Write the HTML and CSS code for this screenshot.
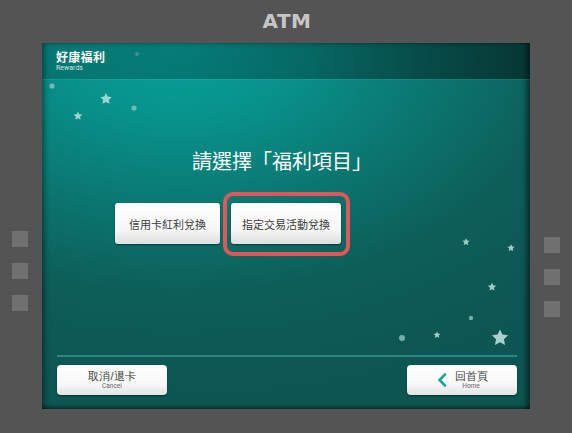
FILE: index.html
```html
<!DOCTYPE html>
<html lang="zh-Hant">
<head>
<meta charset="utf-8">
<title>ATM</title>
<link rel="stylesheet" href="styles.css">
</head>
<body>
<div class="atm">
  <div class="atm-title">ATM</div>
  <div class="atm-body">
    <div class="side side-left">
      <span class="key"></span><span class="key"></span><span class="key"></span>
    </div>
    <div class="screen">
      <svg class="sky" width="488" height="366" viewBox="0 0 488 366" aria-hidden="true">
        <defs>
          <polygon id="st" points="0,-1 0.29,-0.4 0.951,-0.309 0.47,0.153 0.588,0.809 0,0.5 -0.588,0.809 -0.47,0.153 -0.951,-0.309 -0.29,-0.4"/>
        </defs>
        <g fill="#b9dedb">
          <use href="#st" transform="translate(95 11) scale(3)" opacity="0.45"/>
          <use href="#st" transform="translate(64 56) scale(6)" opacity="0.85"/>
          <use href="#st" transform="translate(36 73) scale(4.5)" opacity="0.85"/>
          <use href="#st" transform="translate(424 199) scale(3.8)" opacity="0.85"/>
          <use href="#st" transform="translate(469 205) scale(3.8)" opacity="0.85"/>
          <use href="#st" transform="translate(450 244) scale(4.3)" opacity="0.85"/>
          <use href="#st" transform="translate(395 292) scale(3.6)" opacity="0.85"/>
          <use href="#st" transform="translate(458 295) scale(8.5)" opacity="0.9"/>
        </g>
        <g fill="#8fc3c0" opacity="0.8">
          <circle cx="10" cy="43" r="2.6"/>
          <circle cx="92" cy="65" r="2.6"/>
          <circle cx="429" cy="275" r="2.2"/>
          <circle cx="360" cy="295" r="3"/>
        </g>
      </svg>
      <header class="screen-head">
        <div class="brand">好康福利</div>
        <div class="brand-en">Rewards</div>
      </header>
      <main class="screen-main">
        <h1 class="prompt">請選擇「福利項目」</h1>
        <div class="options">
          <button class="opt opt-a">信用卡紅利兌換</button>
          <button class="opt opt-b">指定交易活動兌換<span class="ring"></span></button>
        </div>
      </main>
      <footer class="screen-foot">
        <button class="nav">
          <span class="nav-text"><span class="nav-zh">取消/退卡</span><span class="nav-en">Cancel</span></span>
        </button>
        <button class="nav">
          <svg class="chev" width="10" height="14" viewBox="0 0 10 14" aria-hidden="true"><polyline points="8,1.5 2.5,7 8,12.5" fill="none" stroke="#1aa69f" stroke-width="2.6" stroke-linecap="round" stroke-linejoin="round"/></svg>
          <span class="nav-text"><span class="nav-zh">回首頁</span><span class="nav-en">Home</span></span>
        </button>
      </footer>
    </div>
    <div class="side side-right">
      <span class="key"></span><span class="key"></span><span class="key"></span>
    </div>
  </div>
</div>
</body>
</html>
```
FILE: styles.css
```css
html, body {
  margin: 0;
  padding: 0;
  background: #545454;
}
body {
  width: 572px;
  height: 433px;
  overflow: hidden;
  font-family: "Noto Sans CJK TC", "Noto Sans", sans-serif;
}
.atm {
  width: 572px;
  height: 433px;
  background: #545454;
}
.atm-title {
  height: 43px;
  line-height: 43px;
  text-align: center;
  font-family: "DejaVu Sans", "Liberation Sans", sans-serif;
  font-weight: 700;
  font-size: 20px;
  letter-spacing: 0.5px;
  color: #c6c6c6;
  padding-left: 2px;
}
.atm-body {
  display: flex;
  align-items: flex-start;
}
.side {
  width: 42px;
  display: flex;
  flex-direction: column;
  gap: 16px;
  box-sizing: border-box;
}
.side-left {
  padding: 188px 0 0 12px;
}
.side-right {
  padding: 194px 0 0 14px;
}
.key {
  display: block;
  width: 16px;
  height: 16px;
  background: #707070;
}
.screen {
  position: relative;
  width: 488px;
  height: 366px;
  display: flex;
  flex-direction: column;
  background:
    radial-gradient(ellipse 110% 95% at 28% 0%, #07a29c 0%, #08928c 22%, #0b7670 48%, #0d5e59 72%, #0e5651 100%);
  box-shadow: inset 4px 0 5px -1px rgba(0,0,0,0.35), inset -5px 0 5px -1px rgba(0,0,0,0.45), inset 0 -4px 4px -2px rgba(0,0,0,0.35);
  overflow: hidden;
}
.sky {
  position: absolute;
  left: 0;
  top: 0;
  pointer-events: none;
}
.screen-head {
  position: relative;
  height: 36px;
  box-sizing: border-box;
  padding: 7px 0 0 14px;
  background: linear-gradient(to right, rgba(0,30,30,0.22) 0%, rgba(0,20,20,0.32) 55%, rgba(0,10,10,0.5) 100%);
  box-shadow: 0 1px 0 rgba(255,255,255,0.07);
  color: #fff;
}
.brand {
  font-size: 12px;
  line-height: 14px;
  font-weight: 700;
  letter-spacing: 0.3px;
}
.brand-en {
  font-family: Roboto, "Noto Sans", sans-serif;
  font-size: 7px;
  line-height: 8px;
  color: #cfe6e4;
}
.screen-main {
  position: relative;
  flex: 1;
  padding-top: 70px;
}
.prompt {
  margin: 0;
  font-size: 20px;
  line-height: 24px;
  font-weight: 400;
  color: #fff;
  text-align: center;
  padding-right: 8px;
  letter-spacing: 0;
}
.options {
  display: flex;
  gap: 11px;
  margin: 30px 0 0 73px;
}
.opt {
  position: relative;
  height: 41px;
  padding: 0;
  border: 0;
  border-radius: 3px;
  background: linear-gradient(#ffffff 0%, #f6f6f6 65%, #dedede 100%);
  box-shadow: 0 1px 2px rgba(0,0,0,0.45);
  font-family: "Noto Sans CJK TC", sans-serif;
  font-size: 11px;
  color: #3c3c3c;
  text-align: center;
}
.opt-a { width: 105px; }
.opt-b { width: 110px; }
.ring {
  position: absolute;
  left: -8px;
  right: -9px;
  top: -11px;
  bottom: -12px;
  border: 4px solid #e0575a;
  border-radius: 10px;
  pointer-events: none;
}
.screen-foot {
  position: relative;
  margin: 0 13px 0 15px;
  padding: 8px 0 14px;
  border-top: 2px solid #2c8782;
  display: flex;
  justify-content: space-between;
}
.nav {
  width: 110px;
  height: 30px;
  padding: 0;
  border: 0;
  border-radius: 4px;
  background: linear-gradient(#ffffff 0%, #f7f7f7 65%, #e2e2e2 100%);
  box-shadow: 0 1px 2px rgba(0,0,0,0.4);
  display: flex;
  align-items: center;
  justify-content: center;
  gap: 8px;
}
.nav-text {
  display: flex;
  flex-direction: column;
  align-items: center;
}
.nav-zh {
  font-size: 11px;
  line-height: 12px;
  color: #3c3c3c;
}
.nav-en {
  font-family: Roboto, "Noto Sans", sans-serif;
  font-size: 6.5px;
  line-height: 8px;
  color: #666;
}
.chev {
  display: block;
}
```
